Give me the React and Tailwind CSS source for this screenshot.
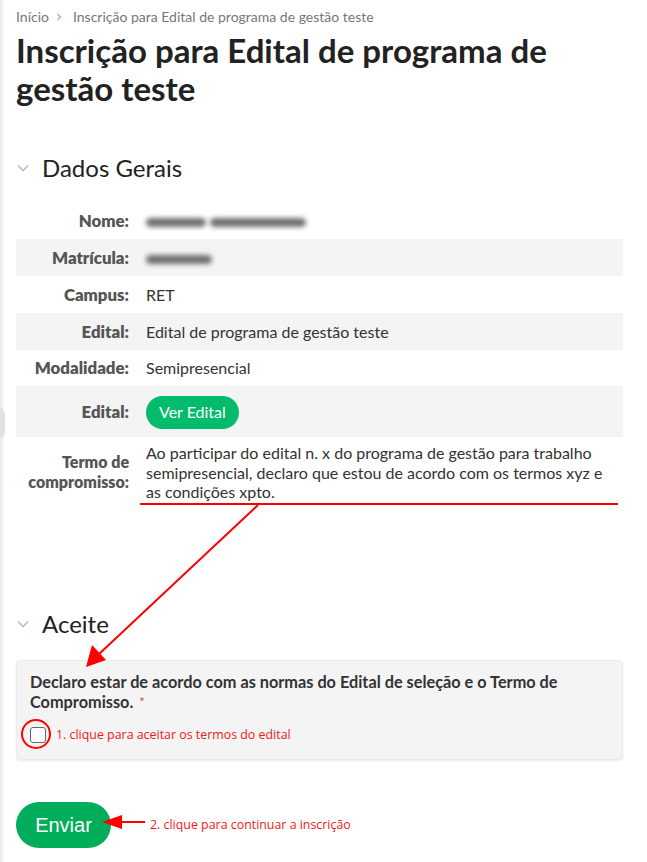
import React from "react";

const Chevron = () => (
  <svg width="14" height="10" viewBox="0 0 14 10" className="shrink-0">
    <path d="M2 2.5 L7 7.5 L12 2.5" fill="none" stroke="#b9bec4" strokeWidth="1.6" />
  </svg>
);

const Row = ({ label, children, gray, h = "h-[37px]" }) => (
  <div className={`flex items-center ${h} ${gray ? "bg-[#f4f4f4]" : ""}`}>
    <div className="w-[113px] shrink-0 text-right font-extrabold text-[16.8px] text-[#555] leading-[20px] whitespace-nowrap">
      {label}
    </div>
    <div className="ml-[17px] pr-2 flex-1 text-[#333] leading-[20px]">{children}</div>
  </div>
);

const Blur = ({ w }) => (
  <span className={`inline-block align-middle h-[9px] ${w} rounded-full bg-[#6f6f6f] blur-[2.5px]`} />
);

export default function App() {
  return (
    <div
      className="relative w-[647px] min-h-[862px] bg-white overflow-hidden"
      style={{ fontFamily: "Lato, 'Open Sans', sans-serif" }}
    >
      {/* left gutter */}
      <div className="absolute left-0 top-0 bottom-0 w-[4px] bg-gradient-to-r from-[#ececec] to-[#fafafa]" />
      <div className="absolute left-[-12px] top-[406px] w-[17px] h-[34px] rounded-full bg-[#e2e2e2]" />

      <div className="pl-4 pr-6 pt-[7px]">
        {/* breadcrumb */}
        <div className="flex items-center text-[14px] leading-[20px] text-[#777]">
          <span>Início</span>
          <svg width="8" height="10" viewBox="0 0 8 10" className="mx-[6px]">
            <path d="M2.5 2 L5.5 5 L2.5 8" fill="none" stroke="#aaa" strokeWidth="1.3" />
          </svg>
          <span className="ml-1">Inscrição para Edital de programa de gestão teste</span>
        </div>

        {/* title */}
        <h1 className="mt-[4px] text-[33px] leading-[38px] font-bold text-[#222]">
          Inscrição para Edital de programa de
          <br />
          gestão teste
        </h1>

        {/* Dados Gerais */}
        <div className="mt-[45px] flex items-center gap-[12px]">
          <Chevron />
          <h2 className="text-[24px] leading-[32px] text-[#222]">Dados Gerais</h2>
        </div>

        <div className="mt-[18px] w-[607px] text-[16px]">
          <Row label="Nome:">
            <span className="inline-flex items-center gap-[4px]">
              <Blur w="w-[60px]" />
              <Blur w="w-[96px]" />
            </span>
          </Row>
          <Row label="Matrícula:" gray>
            <Blur w="w-[66px]" />
          </Row>
          <Row label="Campus:">RET</Row>
          <Row label="Edital:" gray>
            Edital de programa de gestão teste
          </Row>
          <Row label="Modalidade:" h="h-[36px]">
            Semipresencial
          </Row>
          <Row label="Edital:" gray h="h-[51px]">
            <span className="inline-flex items-center h-[33px] px-[13px] rounded-full bg-[#03bb6c] text-white text-[16px] mt-[1px]">
              Ver Edital
            </span>
          </Row>
          <div className="flex items-center pt-[6px] pb-[5px]">
            <div className="w-[113px] shrink-0 text-right font-extrabold text-[#555] leading-[20px] text-[16px]">
              <div>Termo de</div>
              <div>compromisso:</div>
            </div>
            <div className="ml-[17px] pr-1 flex-1 text-[#333] leading-[19.5px]">
              Ao participar do edital n. x do programa de gestão para trabalho semipresencial, declaro que estou de
              acordo com os termos xyz e as condições xpto.
            </div>
          </div>
        </div>

        {/* Aceite */}
        <div className="mt-[101px] flex items-center gap-[12px]">
          <Chevron />
          <h2 className="text-[24px] leading-[32px] text-[#222]">Aceite</h2>
        </div>

        <div className="mt-[20px] w-[607px] rounded-[4px] bg-[#f4f4f4] border border-[#ebebeb] shadow-[0_1px_2px_rgba(0,0,0,0.08)] pl-[13px] pr-4 pt-[11px] pb-[15px]">
          <div className="font-bold text-[16.3px] leading-[20px] text-[#333]">
            Declaro estar de acordo com as normas do Edital de seleção e o Termo de Compromisso.
            <span className="ml-[6px] text-[13px] align-top text-[#e5484d] font-normal">*</span>
          </div>
          <div className="mt-[14px] flex items-center">
            <span className="inline-block w-[16px] h-[16px] rounded-[3px] border-[1.5px] border-[#666] bg-white" />
            <span
              className="ml-[10px] text-[12.4px] text-[#f21818]"
              style={{ fontFamily: "'Open Sans', sans-serif" }}
            >
              1. clique para aceitar os termos do edital
            </span>
          </div>
        </div>

        {/* Enviar */}
        <div className="mt-[42px] flex items-center">
          <button
            className="h-[46px] w-[95px] rounded-full bg-[#00ad5b] text-white text-[20px]"
            style={{ fontFamily: "'Liberation Sans', Arial, sans-serif" }}
          >
            Enviar
          </button>
          <span
            className="ml-[39px] text-[12.4px] text-[#f21818]"
            style={{ fontFamily: "'Open Sans', sans-serif" }}
          >
            2. clique para continuar a inscrição
          </span>
        </div>
      </div>

      {/* annotations overlay */}
      <svg className="absolute left-0 top-0 pointer-events-none" width="647" height="862" viewBox="0 0 647 862">
        <line x1="140" y1="504" x2="618" y2="504" stroke="#f00" strokeWidth="2" />
        <line x1="258" y1="505" x2="98" y2="655" stroke="#f00" strokeWidth="2" />
        <polygon points="86,667 92,645 106,660" fill="#f00" />
        <circle cx="36" cy="734" r="14" fill="none" stroke="#f00" strokeWidth="2" />
        <line x1="145" y1="822" x2="118" y2="822" stroke="#f00" strokeWidth="2" />
        <polygon points="102,822 122,815 122,829" fill="#f00" />
      </svg>
    </div>
  );
}
